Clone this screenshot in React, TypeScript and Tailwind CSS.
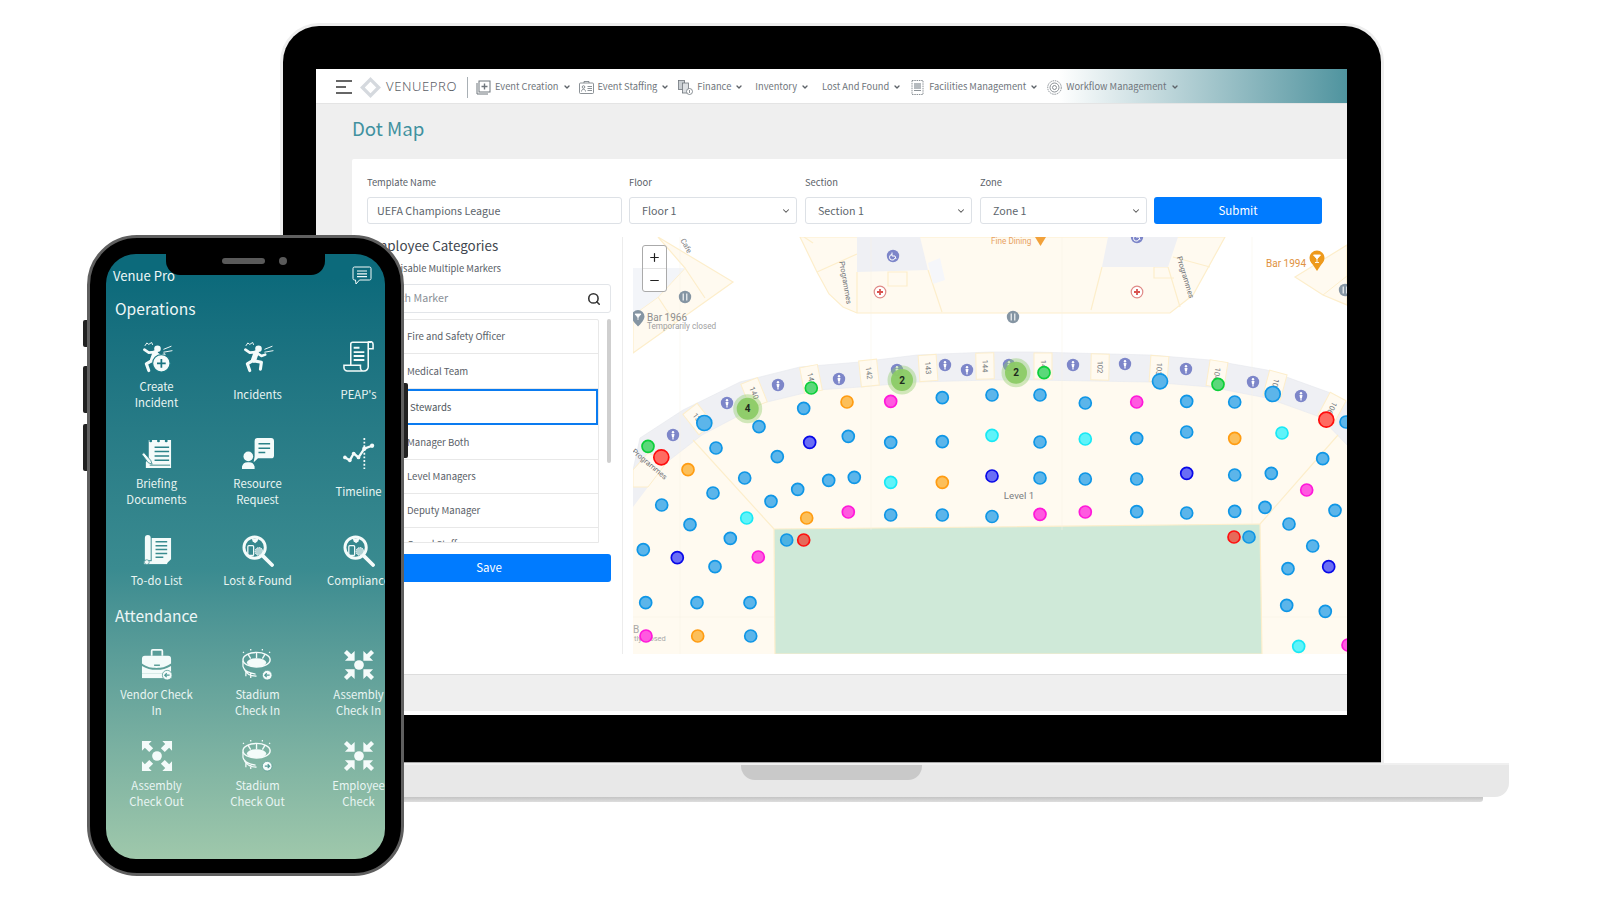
import React from "react";
import { ChevronDown, Search, Plus, Minus } from "lucide-react";

const FONT = '"Noto Sans CJK JP", "Noto Sans", sans-serif';

const W = "#f4fbfa";

const Burst = () => (
  <path d="M4 5l2-3 2 1.500 3-2 1 2.500" fill="none" stroke={W} strokeWidth="1" />
);
const Runner = () => (
  <g>
    <circle cx="17" cy="8" r="3.400" fill={W} />
    <g fill="none" stroke={W} strokeLinejoin="round" strokeLinecap="round">
      <path d="M14.500 12.500L12 19.500" strokeWidth="5.500" />
      <path d="M14 11.500L8 12 3.500 9" strokeWidth="2.800" />
      <path d="M15 12l5 3.500 4-1.500" strokeWidth="2.600" />
      <path d="M11.500 20L5.500 23.500 8 30.500" strokeWidth="3.200" />
      <path d="M12.500 20.500l7.500 1.500-1 7" strokeWidth="3.200" />
      <path d="M23.500 8.500L31 5.500M23.500 11.500l8.500-1.500" strokeWidth="1" />
    </g>
  </g>
);
const CreateIncident = () => (
  <svg viewBox="0 0 33 33" className="w-[32px] h-[32px]">
    <Burst />
    <Runner />
    <circle cx="21" cy="23" r="9" fill={W} stroke="#1b7a85" strokeWidth="1.200" />
    <path d="M21 18.500v9M16.500 23h9" stroke="#187480" strokeWidth="1.800" />
  </svg>
);
const Incidents = () => (
  <svg viewBox="0 0 33 33" className="w-[32px] h-[32px]">
    <Burst />
    <Runner />
  </svg>
);
const Scroll = () => (
  <svg viewBox="0 0 33 33" className="w-[32px] h-[32px]" fill="none" stroke={W} strokeWidth="1.600">
    <path d="M8 25V3.200a2 2 0 0 1 2-2h19" />
    <path d="M26 1.200a3 3 0 0 1 5 2.400V8h-5zM26 4v22a4.500 4.500 0 0 1-4.500 5H4.500A3.500 3.500 0 0 1 1 27.500V25h17v2.500a3.500 3.500 0 0 0 3.500 3.500" />
    <path d="M11 7h6M11 11.500h11M11 15.500h11M11 19.500h11" strokeWidth="2" />
  </svg>
);
const Briefing = () => (
  <svg viewBox="0 0 33 33" className="w-[32px] h-[32px]">
    <path d="M5 2h26v29H5v-6l3-5V2z" fill={W} />
    <circle cx="10" cy="3" r="1.500" fill="#1f7d86" />
    <circle cx="18" cy="3" r="1.500" fill="#1f7d86" />
    <circle cx="26" cy="3" r="1.500" fill="#1f7d86" />
    <path d="M14 9.500h15M14 14h15M14 18.500h15M14 23h15" stroke="#2b8288" strokeWidth="1.500" />
    <path d="M9 28h21" stroke="#3b8a8c" strokeWidth="1" />
    <path d="M3 15l7 8 1.500 4-4-1.500L1 17z" fill={W} stroke="#2b8288" strokeWidth=".8" />
  </svg>
);
const Resource = () => (
  <svg viewBox="0 0 33 33" className="w-[32px] h-[32px]">
    <path d="M13 3a3 3 0 0 1 3-3h14a3 3 0 0 1 3 3v15a3 3 0 0 1-3 3H16.500L12 25l1-6z" fill={W} />
    <path d="M17 6h12M17 10.500h12M17 15h7" stroke="#2b8288" strokeWidth="1.600" />
    <circle cx="6.500" cy="19" r="5" fill={W} />
    <path d="M0 32v-2.500a6 6 0 0 1 6-4.500h1a6 6 0 0 1 6 4.500V32z" fill={W} />
  </svg>
);
const Timeline = () => (
  <svg viewBox="0 0 33 33" className="w-[32px] h-[32px]" fill="none" stroke={W}>
    <path d="M2 20l5 3 4-7 5 4 6-9 8-3" strokeWidth="2.400" strokeLinejoin="round" />
    <g fill={W} stroke="none">
      <circle cx="2" cy="20" r="1.900" /><circle cx="7" cy="23" r="1.900" /><circle cx="11" cy="16" r="1.900" />
      <circle cx="16" cy="20" r="1.900" /><circle cx="22" cy="11" r="2.200" /><circle cx="30" cy="8" r="2.200" />
    </g>
    <path d="M22 0v32" strokeWidth="1.800" strokeDasharray="2 1.800" />
  </svg>
);
const Todo = () => (
  <svg viewBox="0 0 33 33" className="w-[32px] h-[32px]">
    <path d="M4 3a3 3 0 0 1 6 0v23H4z" fill={W} />
    <path d="M11 3h20v22l-4 4H11z" fill={W} />
    <path d="M15 7h12M15 11h12M15 15h12M15 19h12M15 23h8" stroke="#3a8c8f" strokeWidth="1.500" />
    <path d="M3 27h24v3H3z" fill={W} />
    <circle cx="6" cy="28" r="2.500" fill={W} stroke="#3a8c8f" strokeWidth=".7" />
  </svg>
);
const Magnifier = () => (
  <svg viewBox="0 0 33 33" className="w-[32px] h-[32px]" fill="none">
    <circle cx="13" cy="13" r="11" stroke={W} strokeWidth="3" />
    <path d="M22 22l9 9" stroke={W} strokeWidth="3.800" strokeLinecap="round" />
    <path d="M10 3.500h7l-1 3-2.500 2-2.500-2z" fill={W} />
    <rect x="6" y="11" width="6" height="10" rx="1" stroke={W} strokeWidth="1.300" />
    <circle cx="17.500" cy="17" r="4" fill={W} fillOpacity=".65" stroke={W} strokeWidth="1" strokeDasharray="1.500 .8" />
  </svg>
);
const BackBadge = ({ cx, cy, out }: { cx: number; cy: number; out?: boolean }) => (
  <g>
    <circle cx={cx} cy={cy} r="5" fill={W} stroke="#5a9e98" strokeWidth=".8" />
    <path d={out ? `M${cx - 2.500} ${cy}h5M${cx + .5} ${cy - 2}l2 2-2 2` : `M${cx + 2.500} ${cy}h-5M${cx - .5} ${cy - 2}l-2 2 2 2`} stroke="#4f9895" strokeWidth="1.200" fill="none" />
  </g>
);
const Vendor = () => (
  <svg viewBox="0 0 33 33" className="w-[32px] h-[32px]">
    <path d="M11 7V2a1 1 0 0 1 1-1h9a1 1 0 0 1 1 1v5" fill="none" stroke={W} strokeWidth="1.800" />
    <path d="M1 10a3 3 0 0 1 3-3h24a3 3 0 0 1 3 3v5c-6 4-10 4.500-15 4.500S6 19 1 15z" fill={W} />
    <path d="M1 17.500c5 3 9 4 15 4s10-1 15-4V25H1z" fill={W} />
    <path d="M1 25h31V30H1z" fill={W} />
    <rect x="13.500" y="16" width="6" height="1.500" fill="#5a9e98" />
    <BackBadge cx={27} cy={27} />
  </svg>
);
const Stadium = ({ out }: { out?: boolean }) => (
  <svg viewBox="0 0 33 33" className="w-[32px] h-[32px]" fill="none" stroke={W}>
    <ellipse cx="15" cy="11" rx="14" ry="7.500" strokeWidth="1.500" />
    <ellipse cx="15" cy="14" rx="10" ry="4.500" fill={W} stroke="none" />
    <path d="M1 12v6c1 5 7 7 13 8M2 20c2 5 7 8 13 8M4 22v6M9 25v5" strokeWidth="1.300" />
    <path d="M6 5l3 5M15 3.500v6M24 5l-3 5" strokeWidth="1.400" />
    <path d="M9 0v1.500M21 0v1.500M1 3l1 1M29 3l-1 1" strokeWidth="1.300" />
    <BackBadge cx={26} cy={27} out={out} />
  </svg>
);
const Arrow = ({ rot, inward }: { rot: number; inward: boolean }) => (
  <g transform={`rotate(${rot} 16.500 16.500)`}>
    {inward ? (
      <path d="M1 4L4 1 8.500 5.500 12 2V12H2L5.500 8.500z" fill={W} />
    ) : (
      <path d="M1 1H11L8 4 12.500 8.500 8.500 12.500 4 8 1 11z" fill={W} />
    )}
  </g>
);
const Assembly = ({ inward }: { inward: boolean }) => (
  <svg viewBox="0 0 33 33" className="w-[32px] h-[32px]">
    {[0, 90, 180, 270].map((r) => (
      <Arrow key={r} rot={r} inward={inward} />
    ))}
    <circle cx="16.500" cy="16.500" r="5" fill={W} />
  </svg>
);
const ChatIcon = () => (
  <svg viewBox="0 0 20 19" className="w-[20px] h-[19px]" fill="none" stroke={W} strokeWidth="1">
    <path d="M2.500 1h15a1.500 1.500 0 0 1 1.500 1.500v10a1.500 1.500 0 0 1-1.500 1.500H7.500l-3.500 4 -.5-4h-1A1.500 1.500 0 0 1 1 12.500v-10A1.500 1.500 0 0 1 2.500 1z" />
    <path d="M5 5h10M5 7.800h10M5 10.600h10" strokeWidth="1.200" />
  </svg>
);

type Item = { icon: React.ReactNode; label: string[]; top?: boolean };
const opsA: Item[] = [
  { icon: <CreateIncident />, label: ["Create", "Incident"] },
  { icon: <Incidents />, label: ["Incidents"] },
  { icon: <Scroll />, label: ["PEAP's"] },
  { icon: <Briefing />, label: ["Briefing", "Documents"] },
  { icon: <Resource />, label: ["Resource", "Request"] },
  { icon: <Timeline />, label: ["Timeline"] },
];
const opsB: Item[] = [
  { icon: <Todo />, label: ["To-do List"], top: true },
  { icon: <Magnifier />, label: ["Lost & Found"], top: true },
  { icon: <Magnifier />, label: ["Compliance"], top: true },
];
const att: Item[] = [
  { icon: <Vendor />, label: ["Vendor Check", "In"] },
  { icon: <Stadium />, label: ["Stadium", "Check In"] },
  { icon: <Assembly inward />, label: ["Assembly", "Check In"] },
  { icon: <Assembly inward={false} />, label: ["Assembly", "Check Out"] },
  { icon: <Stadium out />, label: ["Stadium", "Check Out"] },
  { icon: <Assembly inward />, label: ["Employee", "Check"] },
];

function Tile({ item, h }: { item: Item; h: string }) {
  return (
    <div className={`flex flex-col items-center ${h}`}>
      <div className="h-[32px] flex items-center justify-center">{item.icon}</div>
      <div
        className={`mt-[5px] h-[32px] w-full flex flex-col items-center text-[11.300px] leading-[16px] text-[#e9f5f3] whitespace-nowrap ${item.top ? "justify-start" : "justify-center"}`}
      >
        {item.label.map((l) => (
          <span key={l}>{l}</span>
        ))}
      </div>
    </div>
  );
}

function Phone() {
  return (
    <div
      className="absolute left-[87px] top-[235px] w-[317px] h-[641px] rounded-[50px] bg-black border-[3px] border-[#5f5f5f] p-[16px]"
      style={{ fontFamily: FONT }}
    >
      <div className="absolute -left-[7px] top-[82px] w-[4px] h-[27px] bg-[#222] rounded-l-[2px]" />
      <div className="absolute -left-[7px] top-[128px] w-[4px] h-[47px] bg-[#222] rounded-l-[2px]" />
      <div className="absolute -left-[7px] top-[186px] w-[4px] h-[47px] bg-[#222] rounded-l-[2px]" />
      <div className="absolute -right-[7px] top-[145px] w-[4px] h-[75px] bg-[#222] rounded-r-[2px]" />
      <div className="absolute left-[76px] top-[0px] w-[159px] h-[37px] bg-black rounded-b-[14px] z-10 flex items-center justify-center gap-[14px] pt-[8px] pl-[18px]">
        <div className="w-[43px] h-[6px] rounded-full bg-[#5a5a5a]" />
        <div className="w-[8px] h-[8px] rounded-full bg-[#5a5a5a]" />
      </div>
      <div className="w-[279px] h-[605px] rounded-[30px] overflow-hidden bg-gradient-to-b from-[#0c6a7b] from-[4%] via-[#3a8b90] via-[52%] to-[#9fc8ab] text-white">
        <div className="h-[43px] flex items-end justify-between pl-[7px] pr-[13px] pb-[11px]">
          <span className="text-[13.100px] leading-[20px] text-[#eef7f7]">Venue Pro</span>
          <span className="mb-[1px]"><ChatIcon /></span>
        </div>
        <div className="pl-[9px] text-[15.600px] leading-[22px] h-[44px] text-[#eef7f7]">Operations</div>
        <div className="w-[303px] grid grid-cols-[101px_101px_101px]">
          {opsA.map((it) => (
            <Tile key={it.label.join()} item={it} h="h-[97px]" />
          ))}
          {opsB.map((it) => (
            <Tile key={it.label.join()} item={it} h="h-[69px]" />
          ))}
        </div>
        <div className="pl-[9px] text-[15.600px] leading-[22px] h-[45px] text-[#eef7f7]">Attendance</div>
        <div className="w-[303px] grid grid-cols-[101px_101px_101px]">
          {att.map((it) => (
            <Tile key={it.label.join()} item={it} h="h-[91px]" />
          ))}
        </div>
      </div>
    </div>
  );
}

const NavIcon = ({ kind }: { kind: string }) => {
  const c = "#6f767c";
  if (kind === "plus")
    return (
      <svg viewBox="0 0 15 15" className="w-[15px] h-[15px]" fill="none" stroke={c} strokeWidth="1">
        <path d="M1 3v11h11" />
        <rect x="3" y="1" width="11" height="11" />
        <path d="M8.500 3.500v6M5.500 6.500h6" strokeWidth="1.400" />
      </svg>
    );
  if (kind === "staff")
    return (
      <svg viewBox="0 0 15 15" className="w-[15px] h-[15px]" fill="none" stroke={c} strokeWidth=".8">
        <rect x=".5" y="3" width="14" height="10.500" rx="1" />
        <path d="M5 3V1.500h5V3" />
        <circle cx="4.500" cy="7" r="1.300" />
        <path d="M2.500 11.500c0-3 4-3 4 0M8.500 6.500h4.500M8.500 8.500h4.500M8.500 10.500h4.500" />
      </svg>
    );
  if (kind === "finance")
    return (
      <svg viewBox="0 0 15 15" className="w-[15px] h-[15px]" fill="none" stroke={c} strokeWidth=".8">
        <rect x=".5" y=".5" width="6" height="9" fill="#c9ced2" />
        <rect x="4.500" y="3" width="6" height="10" fill="#dde0e3" />
        <circle cx="11.500" cy="11.500" r="3" fill="#fff" />
        <path d="M11.500 10v3" />
      </svg>
    );
  if (kind === "fac")
    return (
      <svg viewBox="0 0 15 15" className="w-[15px] h-[15px]" fill="none" stroke={c} strokeWidth=".8">
        <rect x="2" y=".5" width="11" height="14" strokeDasharray="1.500 .8" />
        <rect x="4" y="3" width="7" height="6" fill="#b6bbbf" stroke="none" />
        <path d="M4 10.500h7" />
      </svg>
    );
  return (
    <svg viewBox="0 0 15 15" className="w-[15px] h-[15px]" fill="none" stroke={c} strokeWidth=".8">
      <circle cx="7.500" cy="7.500" r="6.800" strokeDasharray="1.500 .8" />
      <circle cx="7.500" cy="7.500" r="4.500" />
      <circle cx="7.500" cy="7.500" r="2" />
    </svg>
  );
};

const navItems: { label: string; icon?: string; ml: string }[] = [
  { label: "Event Creation", icon: "plus", ml: "ml-[8px]" },
  { label: "Event Staffing", icon: "staff", ml: "ml-[8px]" },
  { label: "Finance", icon: "finance", ml: "ml-[9px]" },
  { label: "Inventory", ml: "ml-[12px]" },
  { label: "Lost And Found", ml: "ml-[13px]" },
  { label: "Facilities Management", icon: "fac", ml: "ml-[9px]" },
  { label: "Workflow Management", icon: "flow", ml: "ml-[9px]" },
];

function Nav() {
  return (
    <div className="h-[35px] flex items-center pl-[20px] pt-[2px] bg-gradient-to-r from-white from-[72%] to-[#4f949f] border-b border-[#e4e4e4] shrink-0">
      <div className="w-[16px] flex flex-col gap-[4px]">
        <div className="h-[2px] w-[16px] bg-[#666]" />
        <div className="h-[2px] w-[10px] bg-[#666]" />
        <div className="h-[2px] w-[16px] bg-[#666]" />
      </div>
      <svg viewBox="0 0 22 22" className="w-[21px] h-[21px] ml-[8px]" fill="none" stroke="#d5d9de" strokeWidth="3.500">
        <path d="M11 2.500L19.500 11 11 19.500 2.500 11z" />
      </svg>
      <span className="ml-[5px] text-[13px] tracking-[0.6px] text-[#5b6066] w-[77px]" style={{ fontFamily: '"Noto Sans", sans-serif', fontWeight: 300 }}>
        VENUEPRO
      </span>
      <div className="w-px h-[21px] bg-[#a9b0b5] ml-[4px]" />
      {navItems.map((n) => (
        <div key={n.label} className={`flex items-center ${n.ml} text-[9.300px] text-[#70767c]`}>
          {n.icon && (
            <span className="mr-[4px]">
              <NavIcon kind={n.icon} />
            </span>
          )}
          <span className="whitespace-nowrap">{n.label}</span>
          <ChevronDown className="w-[8px] h-[8px] ml-[4px] text-[#5d6268]" strokeWidth={4} />
        </div>
      ))}
    </div>
  );
}

function Field({ label, value, w, ml, arrow }: { label: string; value: string; w: string; ml: string; arrow?: boolean }) {
  return (
    <div className={`${w} ${ml} shrink-0`}>
      <div className="h-[14px] mb-[8px] text-[9.400px] leading-[14px] text-[#5a6168]">{label}</div>
      <div className={`h-[27px] pt-[1px] border border-[#dde1e6] rounded-[3px] flex items-center justify-between text-[10.700px] text-[#5d656c] ${arrow ? "pl-[12px] pr-[5px]" : "pl-[9px]"}`}>
        <span>{value}</span>
        {arrow && <ChevronDown className="w-[10px] h-[10px] text-[#555]" strokeWidth={2.500} />}
      </div>
    </div>
  );
}

const listRows = ["Fire and Safety Officer", "Medical Team", "Stewards", "Manager Both", "Level Managers", "Deputy Manager", "Guard Staff"];
const rowH = [34, 35, 36, 35, 34, 34, 34];

function LeftPanel() {
  return (
    <div className="w-[244px] shrink-0">
      <div className="h-[19px] text-[13.400px] leading-[17px] text-[#3f474f]">Employee Categories</div>
      <div className="h-[14px] mt-[5px] pl-[27px] text-[9.400px] leading-[14px] text-[#596067]">Disable Multiple Markers</div>
      <div className="mt-[9px] h-[29px] border border-[#e2e5e9] rounded-[3px] flex items-center justify-between pl-[9px] pr-[9px] text-[10.700px] text-[#8a9097]">
        <span>Search Marker</span>
        <Search className="w-[14px] h-[14px] text-[#333]" strokeWidth={2.700} />
      </div>
      <div className="mt-[6px] flex justify-between">
        <div className="w-[232px] h-[224px] overflow-hidden border border-[#e8e8e8] rounded-t-[2px]">
          {listRows.map((r, i) => (
            <div
              key={r}
              style={{ height: rowH[i] }}
              className={`flex items-center text-[9.600px] ${r === "Stewards" ? "border-2 border-[#0a7bf0] pl-[40px] text-[#4f565d]" : "border-b border-[#e8e8e8] pl-[39px] text-[#596067]"}`}
            >
              {r}
            </div>
          ))}
        </div>
        <div className="w-[4px] h-[144px] bg-[#cfcfcf] rounded-full" />
      </div>
      <div className="mt-[11px] h-[28px] rounded-[3px] bg-[#007bff] flex items-center justify-center text-[11.500px] text-white">Save</div>
    </div>
  );
}

const palette = {
  b: ["#5cb5ea", "#0f96e6"],
  c: ["#5ff3f9", "#18e8f5"],
  o: ["#fcbf5a", "#ff9c12"],
  m: ["#ff5ae0", "#ff18d9"],
  d: ["#6a6ef5", "#0808e8"],
  r: ["#ff6b61", "#ff0d0d"],
  g: ["#5bd87a", "#0ccf3a"],
  B: ["#4db2e2", "#0f96e6"],
  R: ["#e66a5a", "#ff1010"],
} as const;
type K = keyof typeof palette;
const dots: [K, number, number, number?][] = [
  ["g",648,446.300],["r",661.300,457.300,7.500],["o",688,469.700],["b",704.300,423,7.500],["b",716,448],["b",759,426.700],["b",777.300,456.700],
  ["b",803.700,408.300],["g",811.300,388],["o",847,402],["m",890.700,401.300],["b",942.300,397.700],["d",809.700,442.300],["b",848.300,436.300],
  ["b",890.700,442.300],["b",942.300,441.700],["g",1044,372.700],["b",992,395],["b",1040,395],["b",1085.300,403],["m",1136.700,402],["b",1160,381.300,7.500],
  ["b",1186.700,401.300],["g",1218,384.300],["b",1234.700,402],["b",1272.700,394,7.500],["r",1326.300,419.700,7.500],["b",1322.700,458.700],["c",992,435.300],
  ["b",1040,442],["c",1085.300,439],["b",1136.700,438.300],["b",1186.700,432],["o",1234.700,438.300],["c",1282,433],["b",744.700,478],["b",713,493],["b",771,501.300],
  ["b",797.700,489.300],["b",828.700,480.300],["b",854.300,477.300],["c",890.700,482.300],["o",942.300,482.300],["d",992,476],["b",661.700,505],["b",690,524.700],
  ["c",746.700,518],["o",806.700,518],["m",848.300,512],["b",890.700,515],["b",942.300,515],["b",992,516.500],["b",730.300,538.300],["B",786.700,540],["R",803.700,540],
  ["b",643.300,549.700],["d",677.300,557.700],["b",715,566.700],["m",758.300,557],["b",645.700,602.700],["b",697,602.700],["b",750,602.700],["m",646,636],["o",697.700,636],
  ["b",750.700,636],["b",1040,478],["b",1085.300,479],["b",1136.700,479],["d",1186.700,473.300],["b",1234.700,475],["b",1271.300,473.300],["m",1306.700,490],["b",1335,510.300],
  ["m",1040,514.300],["m",1085.300,512],["b",1136.700,511.700],["b",1186.700,513],["b",1234.700,511.300],["b",1265,507.300],["b",1289,524],["b",1312.700,546],["R",1234,537],
  ["B",1249,537],["b",1288,568.700],["d",1328.700,566.700],["b",1286.700,605.300],["b",1325.300,611.300],["c",1298.700,646.300],["m",1348,645],["b",1346,422],
];
const restrooms = [[673,435],[727,403],[778,385],[839,379],[897,370],[945,365],[967,370],[1009,365],[1073,365],[1125,364],[1186,369],[1253,382],[1301,396]];
const cells: [string, number, number, number][] = [
  ["139",698,419,-38],["140",754,393,-22],["141",811,379,-11],["142",869,373,-6],["143",928,368,-4],["144",985,366,-1],["145",1043,366,0],
  ["102",1100,367,1],["103",1159,369,4],["104",1217,374,9],["105",1275,385,15],["106",1332,408,28],
];
const Cream = "#fffaf0";
const Line = "#fdeecb";
const Gray = "#eff0f4";

function MapCanvas() {
  return (
    <div className="relative w-[714px] h-[417px] overflow-hidden shrink-0">
      <svg viewBox="633 237 714 417" className="w-[714px] h-[417px] block" fontFamily="Roboto, sans-serif">
        <rect x="633" y="237" width="714" height="417" fill="#fff" />
        <g stroke={Line} strokeWidth="1.200" fill={Cream}>
          <path d="M658 237L733 282 633 353V315L658 297 685 268z" />
          <path d="M685 268L705 298M658 297L675 323" fill="none" />
          <path d="M800 237l17 35 12 22 14 13 14 6H1170l23-18 32-58z" />
          <path d="M817 272l40-18M857 272v41M928 270l14 42M1102 267l-11 43M1168 267l12 40M1173 257l37 10M1168 267h-14v11h20" fill="none" />
          <path d="M888 272h19v14h-19z" />
          <path d="M804 237l9 6" fill="none" />
        </g>
        <path d="M633 268H685L658 297 633 315z" fill="#f3f5f9" />
        <path d="M857 237h63l8 33-71 2z" fill={Gray} />
        <path d="M928 263l12-5 5 22-12 4z" fill="#f5f6fa" />
        <path d="M1108 237h70l-10 30h-66z" fill={Gray} />
        <path d="M1295 277l52-32v60l-24-10z" fill={Cream} stroke={Line} strokeWidth="1.200" />
        <path d="M1323 295l24-19" fill="none" stroke={Line} />
        <path d="M633 507V470L667 462 702 435 763 403 817 390 860 387 917 382 990 380H1033L1150 382 1210 387 1267 398 1320 417 1347 445V654H633z" fill={Cream} />
        <path d="M633 487h15l-15 20z" fill={Gray} />
        <path d="M633 470L640 438 683 410 740 382 800 367 860 362 917 355 990 352H1033L1150 355 1210 360 1267 370 1328 392 1347 402V445L1320 417 1267 398 1210 387 1150 382 1033 380H990L917 382 860 387 817 390 763 403 702 435 667 462z" fill={Gray} stroke="#e6e7ec" strokeWidth=".6" />
        <path d="M633 470l15-17 19 9 -19 25h-15z" fill={Cream} stroke={Line} />
        {cells.map(([t, x, y, a]) => (
          <g key={t} transform={`translate(${x} ${y}) rotate(${a})`}>
            <rect x="-9" y="-13" width="18" height="26" fill={Cream} stroke={Line} />
            <text x="0" y="2.500" transform="rotate(90)" textAnchor="middle" fontSize="7.500" fill="#72767a">{t}</text>
          </g>
        ))}
        <path d="M774 529L693 440M1260 524L1338 435" stroke={Line} strokeWidth="1.200" fill="none" />
        <path d="M774 529L990 527 1260 524 1262 654H775z" fill="#cfe9d8" stroke={Line} strokeWidth="1.200" />
        <path d="M633 617H774M1262 617h85M680 237v417M871 237V530M1062 237V530M1252 237V524" stroke="#f5f1e6" strokeWidth=".5" fill="none" />

        {restrooms.map(([x, y]) => (
          <g key={`${x}-${y}`}>
            <circle cx={x} cy={y} r="6.200" fill="#7d86c9" />
            <circle cx={x} cy={y - 2.800} r="1.200" fill="#fff" />
            <path d={`M${x - 1.500} ${y - 1}h3l-.5 3h-.4v2.500h-1.200v-2.500h-.4z`} fill="#fff" />
          </g>
        ))}
        {[[893,256],[1137,237]].map(([x, y]) => (
          <g key={x}>
            <circle cx={x} cy={y} r="6.200" fill="#7d86c9" />
            <path d={`M${x - 1} ${y - 3.500}v3.500h3l1 3M${x - 1} ${y - 1.500}a2.800 2.800 0 1 0 3 3.500`} stroke="#fff" strokeWidth="1" fill="none" />
          </g>
        ))}
        {[[880,292],[1137,292]].map(([x, y]) => (
          <g key={x}>
            <circle cx={x} cy={y} r="5.800" fill="#fff" stroke="#e08a87" strokeWidth="1.200" />
            <path d={`M${x} ${y - 3}v6M${x - 3} ${y}h6`} stroke="#d9534f" strokeWidth="1.800" />
          </g>
        ))}
        {[[685,297],[1013,317],[1345,290]].map(([x, y]) => (
          <g key={x}>
            <circle cx={x} cy={y} r="6.200" fill="#8595a3" />
            <path d={`M${x - 1.800} ${y - 3.500}v7M${x + 1.800} ${y - 3.500}v7`} stroke="#fff" strokeWidth="1.100" />
          </g>
        ))}
        <path d="M638 310a6.500 6.500 0 0 1 6.500 6.500c0 4-6.500 10-6.500 10s-6.500-6-6.500-10A6.500 6.500 0 0 1 638 310z" fill="#8595a3" />
        <path d="M635 314h6l-3 3.500zM638 317v3" stroke="#fff" strokeWidth=".8" fill="#fff" />
        <path d="M1035 237h11l-5.500 9z" fill="#f2a13a" />
        <circle cx="1317" cy="258" r="7.500" fill="#ee9a1c" />
        <path d="M1311 262l6 9 6-9z" fill="#ee9a1c" />
        <path d="M1313.500 255h7l-3.500 4zM1317 259v3M1315 262.500h4" stroke="#fff" strokeWidth=".9" fill="#fff" />

        <text x="647" y="321" fontSize="10" fill="#8e8e8e">Bar 1966</text>
        <text x="647" y="329" fontSize="8.200" fill="#a0a0a0">Temporarily closed</text>
        <text transform="translate(684 247) rotate(62)" fontSize="7.500" textAnchor="middle" fill="#77797c">Cafe</text>
        <text transform="translate(843 283) rotate(80)" fontSize="7.500" textAnchor="middle" fill="#6e7074">Programmes</text>
        <text transform="translate(1183 278) rotate(73)" fontSize="7.500" textAnchor="middle" fill="#6e7074">Programmes</text>
        <text transform="translate(648 466) rotate(40)" fontSize="7.500" textAnchor="middle" fill="#6e7074">Programmes</text>
        <text x="991" y="244" fontSize="8.200" fill="#e8a263">Fine Dining</text>
        <text x="1266" y="267" fontSize="10" fill="#e0913e">Bar 1994</text>
        <text x="1019" y="499" fontSize="9.700" textAnchor="middle" fill="#7a7d80">Level 1</text>
        <text x="633" y="633" fontSize="10" fill="#a8a8a8">B</text>
        <text x="634" y="641" fontSize="7.500" fill="#a8a8a8">tly closed</text>

        {dots.map(([k, x, y, r], i) => (
          <circle key={i} cx={x} cy={y} r={r ?? 6} fill={palette[k][0]} stroke={palette[k][1]} strokeWidth="1.700" />
        ))}
        {[[4,747.700,408.700],[2,902,380],[2,1016,372.700]].map(([n, x, y]) => (
          <g key={x}>
            <circle cx={x} cy={y} r="14.500" fill="#8ccb66" fillOpacity=".4" />
            <circle cx={x} cy={y} r="11" fill="#8ccb66" fillOpacity=".95" />
            <text x={x} y={y + 3.500} textAnchor="middle" fontSize="10" fontWeight="700" fill="#1e2a1e">{n}</text>
          </g>
        ))}
      </svg>
      <div className="absolute left-[9px] top-[8px] w-[25px] h-[47px] bg-white border border-[#aaa] rounded-[3px] flex flex-col">
        <div className="flex-1 flex items-center justify-center border-b border-[#e3e3e3]">
          <Plus className="w-[13px] h-[13px] text-[#222]" strokeWidth={2.200} />
        </div>
        <div className="flex-1 flex items-center justify-center">
          <Minus className="w-[13px] h-[13px] text-[#222]" strokeWidth={2.200} />
        </div>
      </div>
    </div>
  );
}

function LaptopScreen() {
  return (
    <div className="w-[1031px] h-[646px] bg-[#efefef] flex flex-col overflow-hidden" style={{ fontFamily: FONT }}>
      <Nav />
      <div className="h-[55px] pl-[36px] pt-[9px] shrink-0 text-[18.700px] leading-[30px] text-[#41919f]">Dot Map</div>
      <div className="ml-[36px] h-[516px] bg-white rounded-tl-[2px] shrink-0 border-b border-[#dddddd] pt-[16px]">
        <div className="flex pl-[15px]">
          <Field label="Template Name" value="UEFA Champions League" w="w-[255px]" ml="ml-0" />
          <Field label="Floor" value="Floor 1" w="w-[168px]" ml="ml-[7px]" arrow />
          <Field label="Section" value="Section 1" w="w-[167px]" ml="ml-[8px]" arrow />
          <Field label="Zone" value="Zone 1" w="w-[167px]" ml="ml-[8px]" arrow />
          <div className="w-[168px] ml-[7px] shrink-0 pt-[22px]">
            <div className="h-[27px] rounded-[3px] bg-[#007bff] flex items-center justify-center text-[11.500px] text-white">Submit</div>
          </div>
        </div>
        <div className="flex pl-[15px] mt-[13px]">
          <LeftPanel />
          <div className="w-px h-[417px] bg-[#ececec] ml-[11px] mr-[10px]" />
          <MapCanvas />
        </div>
      </div>
      <div className="flex-1 border-b-[4px] border-white" />
    </div>
  );
}

function Laptop() {
  return (
    <div className="pt-[26px] pl-[283px] w-[1381px]">
      <div className="w-[1098px] h-[737px] bg-black rounded-t-[36px] shadow-[0_0_0_3px_#eeeeee] border-b border-[#a8a8a8] pt-[43px] pl-[33px]">
        <LaptopScreen />
      </div>
      <div className="w-[1226px]">
        <div className="h-[34px] bg-[#e8e8e8] rounded-br-[14px] border-t-2 border-[#f0f0f0]">
          <div className="ml-[458px] w-[181px] h-[15px] bg-[#c9c9c9] rounded-b-[14px]" />
        </div>
        <div className="w-[1200px] h-[5px] bg-gradient-to-b from-[#c4c4c4] to-[#dedede] rounded-br-[3px]" />
      </div>
    </div>
  );
}

export default function App() {
  return (
    <div className="relative w-[1600px] h-[900px] bg-white overflow-hidden">
      <Laptop />
      <Phone />
    </div>
  );
}
